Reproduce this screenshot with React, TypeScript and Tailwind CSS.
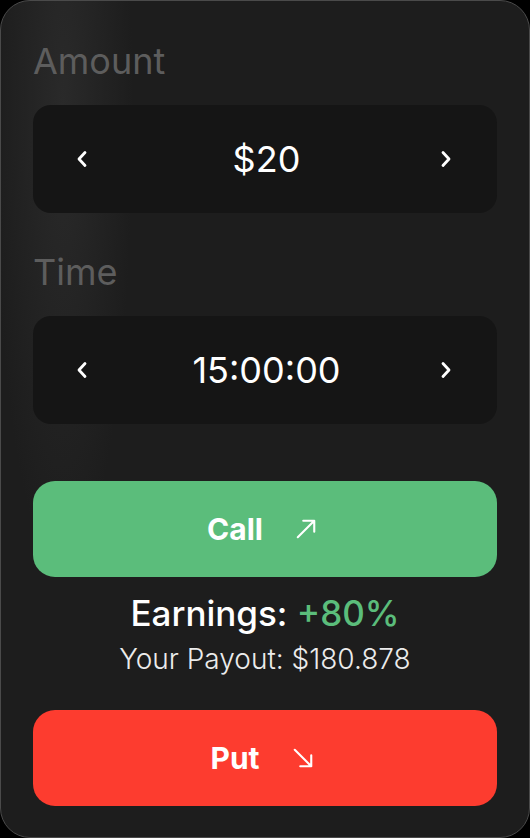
import { type ReactNode } from 'react';

function Chevron({ dir }: { dir: 'left' | 'right' }) {
  return (
    <svg width="14" height="18" viewBox="0 0 14 18" fill="none" className="shrink-0">
      <path
        d={dir === 'left' ? 'M10 2.5 L4 9 L10 15.5' : 'M4 2.5 L10 9 L4 15.5'}
        stroke="white"
        strokeWidth="2.8"
        strokeLinecap="round"
        strokeLinejoin="round"
      />
    </svg>
  );
}

function Stepper({ value }: { value: string }) {
  return (
    <div className="grid h-[108px] grid-cols-[1fr_auto_1fr] items-center rounded-[18px] bg-[#151515] pl-[42px] pr-[44px]">
      <div className="justify-self-start">
        <Chevron dir="left" />
      </div>
      <span className="pl-[5px] text-[36px] font-normal text-white">{value}</span>
      <div className="justify-self-end">
        <Chevron dir="right" />
      </div>
    </div>
  );
}

function Field({ label, children, className }: { label: string; children: ReactNode; className?: string }) {
  return (
    <div className={className}>
      <div className="mb-[23px] text-[36px] leading-[41px] text-[#5d5d5d]">{label}</div>
      {children}
    </div>
  );
}

function ArrowIcon({ up }: { up: boolean }) {
  return (
    <svg width="22" height="22" viewBox="0 0 24 24" fill="none" className="shrink-0">
      {up ? (
        <path d="M3 21 L21 3 M9 3 H21 V15" stroke="white" strokeWidth="2.3" strokeLinecap="round" strokeLinejoin="round" />
      ) : (
        <path d="M3 3 L21 21 M9 21 H21 V9" stroke="white" strokeWidth="2.3" strokeLinecap="round" strokeLinejoin="round" />
      )}
    </svg>
  );
}

function ActionButton({ label, up, color }: { label: string; up: boolean; color: string }) {
  return (
    <button className={`flex h-[96px] w-full items-center justify-center gap-[32px] rounded-[22px] pr-[6px] ${color}`}>
      <span className="text-[30px] font-bold text-white">{label}</span>
      <ArrowIcon up={up} />
    </button>
  );
}

export default function App() {
  return (
    <div className="min-h-screen bg-black font-['Inter','Liberation_Sans',sans-serif]">
      <div className="flex h-[838px] w-[530px] flex-col rounded-[30px] border border-[#4a4a4a] bg-[#1d1d1d] bg-[radial-gradient(ellipse_70px_460px_at_62px_110px,#2a2a2a,transparent)] pb-[31px] pl-[32px] pr-[32px] pt-[40px]">
        <Field label="Amount">
          <Stepper value="$20" />
        </Field>
        <Field label="Time" className="mt-[39px]">
          <Stepper value="15:00:00" />
        </Field>

        <div className="mt-[57px]">
          <ActionButton label="Call" up color="bg-[#5bbd7b]" />
        </div>

        <div className="mt-[16px] text-center text-[35px] font-medium leading-[41px] text-white">
          Earnings: <span className="text-[#5bbd7b]">+80%</span>
        </div>
        <div className="mt-[9px] text-center text-[28px] font-light leading-[32px] text-[#ececec]">
          Your Payout: $180.878
        </div>

        <div className="mt-auto">
          <ActionButton label="Put" up={false} color="bg-[#fd3c2f]" />
        </div>
      </div>
    </div>
  );
}
